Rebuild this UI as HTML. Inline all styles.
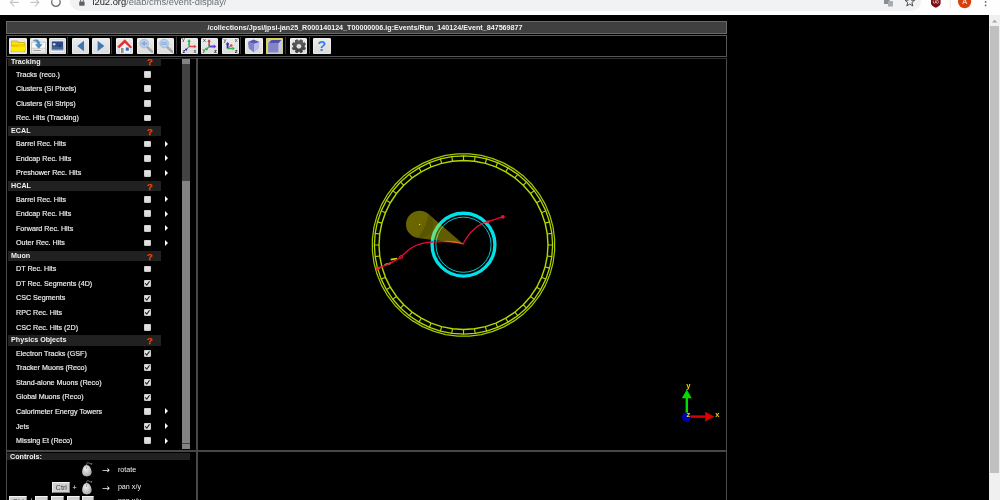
<!DOCTYPE html><html><head><meta charset="utf-8"><title>CMS Event Display</title><style>
html,body{margin:0;padding:0}
body{width:1000px;height:500px;overflow:hidden;background:#000;position:relative;font-family:"Liberation Sans",sans-serif;color:#fff}
.abs{position:absolute}
#wrap{position:absolute;left:0;top:0;width:1000px;height:500px;overflow:hidden;will-change:transform;opacity:0.999;filter:blur(0.3px)}
#chrome{left:0;top:0;width:1000px;height:14.6px;background:#fff;overflow:hidden}
#pill{left:70px;top:-10px;width:851px;height:20.5px;border-radius:10px;background:#f1f3f4}
#url{left:92.4px;top:-2.9px;font-size:9.35px;line-height:11px;white-space:nowrap;color:#6c7075}
#url b{font-weight:normal;color:#202124}
#title{left:6px;top:21px;width:721px;height:12.9px;background:#414141;border:0.6px solid #6a6a6a;box-sizing:border-box;font-weight:bold;font-size:7.16px;line-height:12.6px;text-align:center;padding-right:3px;color:#f4f4f4;white-space:nowrap}
#toolbar{left:6px;top:34.8px;width:721px;height:21.8px;border:0.7px solid #585858;box-sizing:border-box}
.tb{position:absolute;top:37.6px;width:17.4px;height:16.2px;border-radius:1.6px;background:linear-gradient(#ededed,#dcdcdc);box-shadow:inset 0 0 0 0.6px #f6f6f6;overflow:hidden}
.tb svg{position:absolute;left:0;top:0;width:17.4px;height:16.2px}
.sep{position:absolute;top:37px;width:0.8px;height:17.4px;background:#3a3a3a}
#main{left:6px;top:57.7px;width:720.9px;height:450px;border:0.8px solid #4c4c4c;border-top-color:#303030;box-sizing:border-box}
#vline{left:196px;top:57.6px;width:1.5px;height:450px;background:#484848}
#hline{left:6px;top:450.3px;width:720.9px;height:1.5px;background:#484848}
#tree{left:7px;top:58.4px;width:183px;height:391.6px;overflow:hidden}
.hd{position:absolute;left:1.1px;width:152.7px;height:10.3px;background:#222;font-weight:bold;font-size:7.16px;line-height:10.2px;color:#f2f2f2;white-space:nowrap}
.hd span{position:absolute;left:3px;top:-0.2px}
.hd i{position:absolute;left:138.9px;top:0.6px;font-style:normal;color:#ff3d00;font-size:9.6px;font-weight:bold;-webkit-text-stroke:0.25px #ff3d00}
.it{position:absolute;left:0;width:183px;height:14.58px;font-size:7.16px;line-height:14.4px;color:#eee;white-space:nowrap}
.it span{position:absolute;left:9px;top:0.85px;-webkit-text-stroke:0.18px #eee}
.cb{position:absolute;left:137.1px;top:4.1px;width:6.7px;height:6.9px;border-radius:1.4px;background:linear-gradient(#e8e8e8,#d8d8d8);box-shadow:inset 0 0 0 0.5px #bdbdbd}
.cb svg{position:absolute;left:0;top:0;width:6.7px;height:6.9px}
.ar{position:absolute;left:157.8px;top:4.3px;width:0;height:0;border-left:3.5px solid #fff;border-top:3px solid transparent;border-bottom:3px solid transparent}
#tsb{left:182px;top:58.6px;width:7.5px;height:390.8px;background:#444}
#tsb div{position:absolute;left:0;width:7.5px;background:#848484}
#ctl{left:7.4px;top:452.6px;width:182.2px;height:7.6px;background:#222;font-weight:bold;font-size:7.16px;line-height:7.8px;color:#f2f2f2}
#ctl span{position:absolute;left:2.7px;top:1.1px}
.ct{position:absolute;font-size:7.16px;line-height:9px;color:#f0f0f0;white-space:nowrap}
.arw{font-family:'DejaVu Sans',sans-serif;font-size:9.4px;line-height:11px}
.key{position:absolute;box-sizing:border-box;background:#d2d2d2;border:0.9px solid;border-color:#f4f4f4 #8a8a8a #7a7a7a #f0f0f0;color:#454545;font-size:7.3px;line-height:9.6px;text-align:center;white-space:nowrap}
#psb{left:989px;top:14.6px;width:11px;height:486px;background:#f1f1f1}
#psb div{position:absolute;left:1.4px;top:11.6px;width:8.4px;height:447px;background:#c1c1c1}
</style></head><body><div id="wrap">
<div id="chrome" class="abs">
<div id="pill" class="abs"></div>
<div id="url" class="abs"><b>i2u2.org</b>/elab/cms/event-display/</div>
<svg class="abs" style="left:0;top:0" width="1000" height="15" viewBox="0 0 1000 15">
<g fill="none" stroke="#c3c6ca" stroke-width="1.1" stroke-linecap="round" stroke-linejoin="round">
<path d="M18.3 2.4H10.4M14 -1.4L10.3 2.4L14 6.2"/>
<path d="M31 2.4H38.9M35.3 -1.4L39 2.4L35.3 6.2"/>
</g>
<path d="M59.6 0.2A4.2 4.2 0 1 1 52.2 0.2" fill="none" stroke="#5f6368" stroke-width="1.2"/>
<path d="M57.6 -0.5H60.6V-3Z" fill="#5f6368"/>
<rect x="79.2" y="1.4" width="5.4" height="4.3" rx="0.6" fill="#5f6368"/><path d="M80.5 1.6V-0.4Q80.5 -1.8 81.9 -1.8Q83.3 -1.8 83.3 -0.4V1.6" fill="none" stroke="#5f6368" stroke-width="0.9"/>
<g fill="#8b8f94"><rect x="884" y="-2" width="5.6" height="6" rx="0.6"/><rect x="888" y="1" width="5" height="5.6" rx="0.6" fill="#a9adb1"/></g>
<path d="M909.8 -3.4L911.1 0.1L914.6 0.3L911.9 2.5L912.8 6L909.8 4L906.8 6L907.7 2.5L905 0.3L908.5 0.1Z" fill="none" stroke="#4c4f53" stroke-width="1" stroke-linejoin="round"/>
<path d="M931 -3H940.6V3.2C940.6 5.4 938 6.8 935.8 7.7C933.6 6.8 931 5.4 931 3.2Z" fill="#800f12"/>
<path d="M933.3 0.5V2.2A1.1 1.1 0 0 0 935.5 2.2V0.5M936.3 1.5A1 1 0 1 1 938.4 1.5V2.3A1 1 0 1 1 936.3 2.3Z" fill="none" stroke="#fff" stroke-width="0.6"/>
<rect x="949.8" y="-2" width="0.7" height="9.6" fill="#dcdfe3"/>
<circle cx="964.6" cy="1.6" r="6.6" fill="#d5420f"/>
<circle cx="985.6" cy="1.9" r="0.85" fill="#5f6368"/><circle cx="985.6" cy="5.4" r="0.85" fill="#5f6368"/>
<text x="964.6" y="4.3" font-family="Liberation Sans, sans-serif" font-size="7.4" fill="#fff" text-anchor="middle">A</text>
</svg>
</div>
<div id="title" class="abs">/collections/Jpsi/jpsi-jan25_R000140124_T00000006.ig:Events/Run_140124/Event_847569877</div>
<div id="toolbar" class="abs"></div>
<div class="tb" style="left:9.4px"><svg viewBox="0 0 17.4 16.2"><path d="M2 3.6Q2 2.7 2.9 2.7H8.2Q8.9 2.7 9.2 3.3L9.6 4.2H15.2Q16.2 4.2 16.2 5.2V12.8Q16.2 13.9 15.2 13.9H3Q2 13.9 2 12.8Z" fill="#8a7a00"/>
<path d="M2.2 3.7Q2.2 2.9 3 2.9H8.1Q8.7 2.9 9 3.5L9.4 4.4H15Q15.9 4.4 15.9 5.3V12.6Q15.9 13.6 15 13.6H3.1Q2.2 13.6 2.2 12.6Z" fill="#f2d400"/>
<path d="M1.9 8.6H16.3L15.9 12.8Q15.8 13.7 14.9 13.7H3.2Q2.3 13.7 2.2 12.8Z" fill="#ffec00"/>
<rect x="2.8" y="7.5" width="6.6" height="1" fill="#f0a800" opacity=".8"/>
<rect x="2.6" y="4.9" width="12.8" height=".8" fill="#fff27a" opacity=".7"/></svg></div>
<div class="tb" style="left:29.7px"><svg viewBox="0 0 17.4 16.2"><path d="M1.6 4.2H15.6V15H1.6Z" fill="#fafafa" stroke="#b4b4b4" stroke-width=".6"/>
<path d="M1.6 10.2H15.6V15H1.6Z" fill="#e9e9e9" stroke="#b4b4b4" stroke-width=".5"/>
<rect x="3.4" y="12.1" width="7.4" height=".9" fill="#9c9c9c"/>
<path d="M3.2 2.6C6.4 0.6 9.8 1.8 10.1 6.4H12.1L8.7 10.4L5.3 6.4H7.4C7.4 4.2 6 2.6 3.2 2.6Z" fill="#4a93cc" stroke="#3577b2" stroke-width=".4"/></svg></div>
<div class="tb" style="left:49.0px"><svg viewBox="0 0 17.4 16.2"><rect x="1.2" y="1.8" width="14.6" height="13" rx="1" fill="#f2f2f2" stroke="#bdbdbd" stroke-width=".5"/>
<rect x="2.8" y="3.4" width="11.4" height="8.4" fill="#2c4c86"/>
<rect x="2.8" y="8.4" width="11.4" height="3.4" fill="#46649a"/>
<rect x="2.8" y="11.2" width="11.4" height="1.3" fill="#7f95b8"/>
<ellipse cx="5.2" cy="6.3" rx="1.5" ry="1.1" fill="#e4e8f0"/><path d="M9 9L11.4 6.6L12.2 9Z" fill="#26365a"/></svg></div>
<div class="tb" style="left:71.8px"><svg viewBox="0 0 17.4 16.2"><path d="M12 2.8V13.2L5.2 8Z" fill="#4178b4"/></svg></div>
<div class="tb" style="left:92.3px"><svg viewBox="0 0 17.4 16.2"><path d="M5.6 2.8V13.2L12.4 8Z" fill="#4178b4"/></svg></div>
<div class="tb" style="left:116.0px"><svg viewBox="0 0 17.4 16.2"><path d="M3.4 8.2L8.8 3.4L14.5 8.2V15H3.4Z" fill="#f6f6f6" stroke="#c4c4c4" stroke-width=".4"/>
<rect x="5" y="10.2" width="2.5" height="4.6" fill="#757575"/><rect x="5.6" y="10.8" width="1.1" height="4" fill="#b0aaa4"/>
<rect x="9.8" y="9.5" width="3" height="3.2" fill="#2d6ec4"/>
<path d="M1.2 8.7L8.8 1.2L16.2 9.2L14.4 10.3L8.8 4.9L3.2 10.2Z" fill="#ea2f33"/></svg></div>
<div class="tb" style="left:136.5px"><svg viewBox="0 0 17.4 16.2"><path d="M10.6 9.4L15 13.6" stroke="#a2a2a2" stroke-width="2.3" stroke-linecap="round"/>
<path d="M10.9 9.7L14.8 13.4" stroke="#dcdcdc" stroke-width=".8" stroke-dasharray=".6 .6"/>
<circle cx="7.15" cy="5.5" r="4.3" fill="#b9d2ee" stroke="#a4b4c8" stroke-width=".8"/>
<path d="M4.5 5.5H9.8M7.15 2.9V8.1" stroke="#7ea6dc" stroke-width="1.3"/></svg></div>
<div class="tb" style="left:156.8px"><svg viewBox="0 0 17.4 16.2"><path d="M10.6 9.4L15 13.6" stroke="#a2a2a2" stroke-width="2.3" stroke-linecap="round"/>
<path d="M10.9 9.7L14.8 13.4" stroke="#dcdcdc" stroke-width=".8" stroke-dasharray=".6 .6"/>
<circle cx="7.15" cy="5.5" r="4.3" fill="#b9d2ee" stroke="#a4b4c8" stroke-width=".8"/>
<path d="M4.4 5.5H9.9" stroke="#6f9ad6" stroke-width="2.2"/><path d="M4.6 5.5H9.7" stroke="#d6e4f6" stroke-width=".6"/></svg></div>
<div class="tb" style="left:180.8px"><svg viewBox="0 0 17.4 16.2"><path d="M8.1 8.5V3" stroke="#22b43c" stroke-width="1.5"/><path d="M8.1 1.2L9.9 3.7H6.3Z" fill="#22b43c"/>
<path d="M8.1 8.5H13.2" stroke="#ee4444" stroke-width="1.6"/><path d="M15.7 8.5L12.9 6.7V10.3Z" fill="#ee4444"/>
<path d="M8.1 8.5L5.2 11.6" stroke="#3a48d0" stroke-width="0.9"/><circle cx="5.2" cy="11.6" r="1.15" fill="#1c22b4"/>
<g font-family="Liberation Sans, sans-serif" font-size="5.8" fill="#2a2a2a"><text x="1.1" y="3.4">y</text><text x="1.4" y="14.9" font-weight="bold">z</text><text x="12.5" y="15">x</text></g></svg></div>
<div class="tb" style="left:201.1px"><svg viewBox="0 0 17.4 16.2"><path d="M8.1 8.5V3" stroke="#b43434" stroke-width="1.4"/><path d="M8.1 1.3L9.8 3.8H6.4Z" fill="#b43434"/>
<path d="M8.1 8.5H13" stroke="#6a40e2" stroke-width="1.9"/><path d="M15.4 8.5L12.8 6.6V10.4Z" fill="#6a40e2"/>
<path d="M8.1 8.5L5.5 11.1" stroke="#34b84e" stroke-width="1.1"/><circle cx="5.5" cy="11.1" r="1.4" fill="#34b84e"/>
<g font-family="Liberation Sans, sans-serif" font-size="5.8" fill="#2a2a2a"><text x="1.9" y="4.4">x</text><text x="1.5" y="14.2">y</text><text x="12.9" y="15" font-weight="bold">z</text></g></svg></div>
<div class="tb" style="left:221.5px"><svg viewBox="0 0 17.4 16.2"><path d="M5.6 10.4V5.6" stroke="#2c30b4" stroke-width="1.9"/><path d="M5.6 4L7.5 6.4H3.7Z" fill="#2c30b4"/>
<path d="M5.9 10.2L9.3 7.5" stroke="#e44040" stroke-width="1"/><circle cx="9.3" cy="7.5" r="1.2" fill="#e44040"/>
<path d="M5.6 10.5H10.6" stroke="#30b84c" stroke-width="1.7"/><path d="M12.9 10.5L10.3 8.7V12.3Z" fill="#30b84c"/>
<g font-family="Liberation Sans, sans-serif" font-size="5.8" fill="#2a2a2a"><text x="1.5" y="3.6">y</text><text x="12.7" y="4.4">x</text><text x="12.8" y="15" font-weight="bold">z</text></g></svg></div>
<div class="tb" style="left:245.3px"><svg viewBox="0 0 17.4 16.2"><path d="M2.85 4L8.55 1.6L14.7 4L9 5.9Z" fill="#5a5bb0"/>
<path d="M2.85 4L9 5.9V14.4L3.8 10.6Z" fill="#8183c9"/>
<path d="M14.7 4L9 5.9V14.4L13.8 10.6Z" fill="#b9bbee"/></svg></div>
<div class="tb" style="left:266.1px"><svg viewBox="0 0 17.4 16.2"><rect x="0" y="0" width="17.4" height="16.2" fill="#c6c6c6"/>
<rect x=".45" y=".45" width="16.5" height="15.3" rx="1.3" fill="none" stroke="#e4da4a" stroke-width=".9"/>
<path d="M2.2 5.4L5.5 1.9H15.5L12.6 5.4Z" fill="#5254aa"/>
<rect x="2.2" y="5.4" width="10.4" height="9" fill="#8385c8"/>
<path d="M12.6 5.4L15.5 1.9V11.6L12.6 14.4Z" fill="#c6c8f4"/></svg></div>
<div class="tb" style="left:289.6px"><svg viewBox="0 0 17.4 16.2"><defs><linearGradient id="gg" x1="0" y1="0" x2="0" y2="1"><stop offset="0" stop-color="#666"/><stop offset="1" stop-color="#3c3c3c"/></linearGradient></defs><path d="M14.05 8.99L15.41 9.86L14.61 11.80L13.03 11.45L12.05 12.43L12.40 14.01L10.46 14.81L9.59 13.45L8.21 13.45L7.34 14.81L5.40 14.01L5.75 12.43L4.77 11.45L3.19 11.80L2.39 9.86L3.75 8.99L3.75 7.61L2.39 6.74L3.19 4.80L4.77 5.15L5.75 4.17L5.40 2.59L7.34 1.79L8.21 3.15L9.59 3.15L10.46 1.79L12.40 2.59L12.05 4.17L13.03 5.15L14.61 4.80L15.41 6.74L14.05 7.61Z" fill="url(#gg)" stroke="#4a4a4a" stroke-width="1" stroke-linejoin="round"/><circle cx="8.9" cy="8.3" r="2.4" fill="#e2e2e2"/></svg></div>
<div class="tb" style="left:313.4px"><svg viewBox="0 0 17.4 16.2"><text x="8.8" y="13.4" font-family="Liberation Sans, sans-serif" font-size="14.4" font-weight="bold" fill="#3a80e8" text-anchor="middle">?</text></svg></div>
<div class="sep" style="left:67.3px"></div>
<div class="sep" style="left:110.9px"></div>
<div class="sep" style="left:175.8px"></div>
<div class="sep" style="left:239.8px"></div>
<div class="sep" style="left:285.2px"></div>
<div class="sep" style="left:308.8px"></div>
<div id="main" class="abs"></div><div id="vline" class="abs"></div><div id="hline" class="abs"></div>
<div id="tree" class="abs">
<div class="hd" style="top:-2.21px"><span style="top:0.5px">Tracking</span><i>?</i></div>
<div class="it" style="top:8.30px"><span>Tracks (reco.)</span><div class="cb"></div></div>
<div class="it" style="top:22.88px"><span>Clusters (Si Pixels)</span><div class="cb"></div></div>
<div class="it" style="top:37.46px"><span>Clusters (Si Strips)</span><div class="cb"></div></div>
<div class="it" style="top:52.04px"><span>Rec. Hits (Tracking)</span><div class="cb"></div></div>
<div class="hd" style="top:67.58px"><span>ECAL</span><i>?</i></div>
<div class="it" style="top:78.09px"><span>Barrel Rec. Hits</span><div class="cb"></div><div class="ar"></div></div>
<div class="it" style="top:92.67px"><span>Endcap Rec. Hits</span><div class="cb"></div><div class="ar"></div></div>
<div class="it" style="top:107.25px"><span>Preshower Rec. Hits</span><div class="cb"></div><div class="ar"></div></div>
<div class="hd" style="top:122.78px"><span>HCAL</span><i>?</i></div>
<div class="it" style="top:133.29px"><span>Barrel Rec. Hits</span><div class="cb"></div><div class="ar"></div></div>
<div class="it" style="top:147.87px"><span>Endcap Rec. Hits</span><div class="cb"></div><div class="ar"></div></div>
<div class="it" style="top:162.45px"><span>Forward Rec. Hits</span><div class="cb"></div><div class="ar"></div></div>
<div class="it" style="top:177.03px"><span>Outer Rec. Hits</span><div class="cb"></div><div class="ar"></div></div>
<div class="hd" style="top:192.56px"><span>Muon</span><i>?</i></div>
<div class="it" style="top:203.07px"><span>DT Rec. Hits</span><div class="cb"></div></div>
<div class="it" style="top:217.65px"><span>DT Rec. Segments (4D)</span><div class="cb"><svg viewBox="0 0 6.7 6.9"><path d="M1.5 3.6L2.8 5.1L5.3 1.6" fill="none" stroke="#222" stroke-width="1.05" stroke-linecap="round" stroke-linejoin="round"/></svg></div></div>
<div class="it" style="top:232.23px"><span>CSC Segments</span><div class="cb"><svg viewBox="0 0 6.7 6.9"><path d="M1.5 3.6L2.8 5.1L5.3 1.6" fill="none" stroke="#222" stroke-width="1.05" stroke-linecap="round" stroke-linejoin="round"/></svg></div></div>
<div class="it" style="top:246.81px"><span>RPC Rec. Hits</span><div class="cb"><svg viewBox="0 0 6.7 6.9"><path d="M1.5 3.6L2.8 5.1L5.3 1.6" fill="none" stroke="#222" stroke-width="1.05" stroke-linecap="round" stroke-linejoin="round"/></svg></div></div>
<div class="it" style="top:261.39px"><span>CSC Rec. Hits (2D)</span><div class="cb"></div></div>
<div class="hd" style="top:276.92px"><span>Physics Objects</span><i>?</i></div>
<div class="it" style="top:287.43px"><span>Electron Tracks (GSF)</span><div class="cb"><svg viewBox="0 0 6.7 6.9"><path d="M1.5 3.6L2.8 5.1L5.3 1.6" fill="none" stroke="#222" stroke-width="1.05" stroke-linecap="round" stroke-linejoin="round"/></svg></div></div>
<div class="it" style="top:302.01px"><span>Tracker Muons (Reco)</span><div class="cb"><svg viewBox="0 0 6.7 6.9"><path d="M1.5 3.6L2.8 5.1L5.3 1.6" fill="none" stroke="#222" stroke-width="1.05" stroke-linecap="round" stroke-linejoin="round"/></svg></div></div>
<div class="it" style="top:316.59px"><span>Stand-alone Muons (Reco)</span><div class="cb"><svg viewBox="0 0 6.7 6.9"><path d="M1.5 3.6L2.8 5.1L5.3 1.6" fill="none" stroke="#222" stroke-width="1.05" stroke-linecap="round" stroke-linejoin="round"/></svg></div></div>
<div class="it" style="top:331.17px"><span>Global Muons (Reco)</span><div class="cb"><svg viewBox="0 0 6.7 6.9"><path d="M1.5 3.6L2.8 5.1L5.3 1.6" fill="none" stroke="#222" stroke-width="1.05" stroke-linecap="round" stroke-linejoin="round"/></svg></div></div>
<div class="it" style="top:345.75px"><span>Calorimeter Energy Towers</span><div class="cb"></div><div class="ar"></div></div>
<div class="it" style="top:360.33px"><span>Jets</span><div class="cb"><svg viewBox="0 0 6.7 6.9"><path d="M1.5 3.6L2.8 5.1L5.3 1.6" fill="none" stroke="#222" stroke-width="1.05" stroke-linecap="round" stroke-linejoin="round"/></svg></div><div class="ar"></div></div>
<div class="it" style="top:374.91px"><span>Missing Et (Reco)</span><div class="cb"></div><div class="ar"></div></div>
</div>
<div id="tsb" class="abs"><div style="top:0;height:5.9px"></div><div style="top:122.2px;height:262.3px"></div><div style="top:385px;height:5.8px"></div></div>
<svg class="abs" style="left:198px;top:59px" width="528" height="391" viewBox="198 59 528 391"><g fill="none" stroke="#b2da00" stroke-linejoin="round"><g stroke-width="1.25" stroke-opacity="0.92"><polygon points="469.47,153.90 481.31,155.45 492.85,158.55 503.88,163.12 514.22,169.09 523.70,176.36 532.14,184.80 539.41,194.28 545.38,204.62 549.95,215.65 553.05,227.19 554.60,239.03 554.60,250.97 553.05,262.81 549.95,274.35 545.38,285.38 539.41,295.72 532.14,305.20 523.70,313.64 514.22,320.91 503.88,326.88 492.85,331.45 481.31,334.55 469.47,336.10 457.53,336.10 445.69,334.55 434.15,331.45 423.12,326.88 412.78,320.91 403.30,313.64 394.86,305.20 387.59,295.72 381.62,285.38 377.05,274.35 373.95,262.81 372.40,250.97 372.40,239.03 373.95,227.19 377.05,215.65 381.62,204.62 387.59,194.28 394.86,184.80 403.30,176.36 412.78,169.09 423.12,163.12 434.15,158.55 445.69,155.45 457.53,153.90"/></g><g stroke-width="1.3"><polygon points="463.50,155.90 475.13,156.66 486.56,158.94 497.60,162.68 508.05,167.84 517.74,174.31 526.50,182.00 534.19,190.76 540.66,200.45 545.82,210.90 549.56,221.94 551.84,233.37 552.60,245.00 551.84,256.63 549.56,268.06 545.82,279.10 540.66,289.55 534.19,299.24 526.50,308.00 517.74,315.69 508.05,322.16 497.60,327.32 486.56,331.06 475.13,333.34 463.50,334.10 451.87,333.34 440.44,331.06 429.40,327.32 418.95,322.16 409.26,315.69 400.50,308.00 392.81,299.24 386.34,289.55 381.18,279.10 377.44,268.06 375.16,256.63 374.40,245.00 375.16,233.37 377.44,221.94 381.18,210.90 386.34,200.45 392.81,190.76 400.50,182.00 409.26,174.31 418.95,167.84 429.40,162.68 440.44,158.94 451.87,156.66"/></g><g stroke-width="1.45"><polygon points="463.50,160.50 474.53,161.22 485.37,163.38 495.84,166.93 505.75,171.82 514.94,177.96 523.25,185.25 530.54,193.56 536.68,202.75 541.57,212.66 545.12,223.13 547.28,233.97 548.00,245.00 547.28,256.03 545.12,266.87 541.57,277.34 536.68,287.25 530.54,296.44 523.25,304.75 514.94,312.04 505.75,318.18 495.84,323.07 485.37,326.62 474.53,328.78 463.50,329.50 452.47,328.78 441.63,326.62 431.16,323.07 421.25,318.18 412.06,312.04 403.75,304.75 396.46,296.44 390.32,287.25 385.43,277.34 381.88,266.87 379.72,256.03 379.00,245.00 379.72,233.97 381.88,223.13 385.43,212.66 390.32,202.75 396.46,193.56 403.75,185.25 412.06,177.96 421.25,171.82 431.16,166.93 441.63,163.38 452.47,161.22"/></g><path d="M463.50 160.50L463.50 155.70M474.53 161.22L475.16 156.46M485.37 163.38L486.61 158.74M495.84 166.93L497.67 162.50M505.75 171.82L508.15 167.66M514.94 177.96L517.86 174.15M523.25 185.25L526.64 181.86M530.54 193.56L534.35 190.64M536.68 202.75L540.84 200.35M541.57 212.66L546.00 210.83M545.12 223.13L549.76 221.89M547.28 233.97L552.04 233.34M548.00 245.00L552.80 245.00M547.28 256.03L552.04 256.66M545.12 266.87L549.76 268.11M541.57 277.34L546.00 279.17M536.68 287.25L540.84 289.65M530.54 296.44L534.35 299.36M523.25 304.75L526.64 308.14M514.94 312.04L517.86 315.85M505.75 318.18L508.15 322.34M495.84 323.07L497.67 327.50M485.37 326.62L486.61 331.26M474.53 328.78L475.16 333.54M463.50 329.50L463.50 334.30M452.47 328.78L451.84 333.54M441.63 326.62L440.39 331.26M431.16 323.07L429.33 327.50M421.25 318.18L418.85 322.34M412.06 312.04L409.14 315.85M403.75 304.75L400.36 308.14M396.46 296.44L392.65 299.36M390.32 287.25L386.16 289.65M385.43 277.34L381.00 279.17M381.88 266.87L377.24 268.11M379.72 256.03L374.96 256.66M379.00 245.00L374.20 245.00M379.72 233.97L374.96 233.34M381.88 223.13L377.24 221.89M385.43 212.66L381.00 210.83M390.32 202.75L386.16 200.35M396.46 193.56L392.65 190.64M403.75 185.25L400.36 181.86M412.06 177.96L409.14 174.15M421.25 171.82L418.85 167.66M431.16 166.93L429.33 162.50M441.63 163.38L440.39 158.74M452.47 161.22L451.84 156.46" stroke-width="1.15"/></g><circle cx="463.5" cy="244.7" r="31.4" fill="none" stroke="#00e2ea" stroke-width="3.4"/><circle cx="463.5" cy="244.7" r="27.6" fill="none" stroke="#00e2ea" stroke-width="0.9"/><path d="M390.6 259.7L397 258.5M384.6 264.9L391 263.1" stroke="#c8e800" stroke-width="1.7" fill="none"/><g fill="none" stroke="#ee0a3c" stroke-width="1.4" stroke-linecap="round"><path d="M463.2 243.8C466 238 471 231 478 226C482 223.4 485 222.4 487.8 221.6L502.8 216.8"/><path d="M463.2 243.8C457 242 450 241.4 444.2 241.6C438 241.6 432 241.8 427 242.4C421 243.2 414 246 409.4 249.2C405.6 252 403.6 254.6 401 257C397 260 393 261.8 389 263.6L377.6 268.7"/></g><circle cx="502.8" cy="216.8" r="1.9" fill="#f01040"/><circle cx="488" cy="221.8" r="1.6" fill="#d81a48"/><circle cx="401" cy="257.2" r="1.7" fill="none" stroke="#ee0a3c" stroke-width="1"/><circle cx="377.8" cy="268.6" r="2" fill="#f03020"/><path d="M463.20 243.90L428.46 214.08L417.81 237.88Z" fill="#f4e800" fill-opacity="0.40"/><circle cx="419.60" cy="224.40" r="13.60" fill="#6c6600"/><clipPath id="jc"><circle cx="419.60" cy="224.40" r="13.60"/></clipPath><path d="M463.20 243.90L428.46 214.08Q426.43 227.45 417.81 237.88Z" fill="#000" fill-opacity="0.16" clip-path="url(#jc)"/><circle cx="419.60" cy="224.40" r="0.7" fill="#e8e000"/><rect x="685.6" y="397" width="2.4" height="16" fill="#00dc00"/><path d="M686.8 389.6L691.8 398.2H681.8Z" fill="#00dc00"/><circle cx="686.5" cy="417.1" r="4.6" fill="#0000a8"/><rect x="690.6" y="415.4" width="15" height="2.4" fill="#e00000"/><path d="M714.2 416.6L705.2 411.8V421.4Z" fill="#e00000"/><g font-family="Liberation Sans, sans-serif" font-weight="bold" font-size="7.6" fill="#e8d800"><text x="686.2" y="387.6">y</text><text x="686.4" y="417">z</text><text x="715.2" y="417">x</text></g></svg>
<div id="ctl" class="abs"><span>Controls:</span></div>
<svg class="abs" style="left:80.6px;top:462.2px" width="12" height="15" viewBox="0 0 12 15"><defs><radialGradient id="mg1" cx="40%" cy="35%" r="70%"><stop offset="0" stop-color="#f2f2f2"/><stop offset="1" stop-color="#a8a8a8"/></radialGradient></defs>
<path d="M5.6 3.2C5.5 1.4 6 0.5 7 0.7C8.4 1 9 2.4 10.6 1.4C11.2 1 11 2 10.4 2.8" fill="none" stroke="#b4b4b4" stroke-width=".6"/>
<path d="M5.6 3C8.4 3 10.4 6.4 10.6 9.8C10.8 12.8 8.6 14.4 5.8 14.4C3 14.4 1 12.8 1.2 9.8C1.4 6.4 3 3 5.6 3Z" fill="url(#mg1)"/>
<rect x="5.3" y="4.4" width=".7" height="2.6" fill="#8a8a8a"/></svg>
<svg class="abs" style="left:80.6px;top:480.0px" width="12" height="15" viewBox="0 0 12 15"><defs><radialGradient id="mg2" cx="40%" cy="35%" r="70%"><stop offset="0" stop-color="#f2f2f2"/><stop offset="1" stop-color="#a8a8a8"/></radialGradient></defs>
<path d="M5.6 3.2C5.5 1.4 6 0.5 7 0.7C8.4 1 9 2.4 10.6 1.4C11.2 1 11 2 10.4 2.8" fill="none" stroke="#b4b4b4" stroke-width=".6"/>
<path d="M5.6 3C8.4 3 10.4 6.4 10.6 9.8C10.8 12.8 8.6 14.4 5.8 14.4C3 14.4 1 12.8 1.2 9.8C1.4 6.4 3 3 5.6 3Z" fill="url(#mg2)"/>
<rect x="5.3" y="4.4" width=".7" height="2.6" fill="#8a8a8a"/></svg>
<div class="ct arw" style="left:102.2px;top:464.3px">→</div><div class="ct" style="left:117.9px;top:465.5px">rotate</div>
<div class="ct arw" style="left:102.2px;top:482.1px">→</div><div class="ct" style="left:117.9px;top:483.1px">pan x/y</div>
<div class="ct" style="left:117.9px;top:496.6px">pan x/y</div>
<div class="ct" style="left:72.4px;top:483.5px">+</div>
<div class="key" style="left:52.4px;top:481.8px;width:17.8px;height:10.8px">Ctrl</div>
<div class="key" style="left:9.4px;top:495.6px;width:17.8px;height:10.8px">Ctrl</div>
<div class="ct" style="left:29.6px;top:497.3px">+</div>
<div class="key" style="left:35.4px;top:495.6px;width:12.8px;height:10.8px">←</div>
<div class="key" style="left:51.2px;top:495.6px;width:12.8px;height:10.8px">↑</div>
<div class="key" style="left:66.8px;top:495.6px;width:12.8px;height:10.8px">→</div>
<div class="key" style="left:81.6px;top:495.6px;width:12.8px;height:10.8px">↓</div>
<div id="psb" class="abs"><div></div><svg class="abs" style="left:0;top:0" width="11" height="11" viewBox="0 0 11 11"><path d="M3 7.4L5.6 4.8L8.2 7.4Z" fill="#a6a6a6"/></svg></div>
</div></body></html>
